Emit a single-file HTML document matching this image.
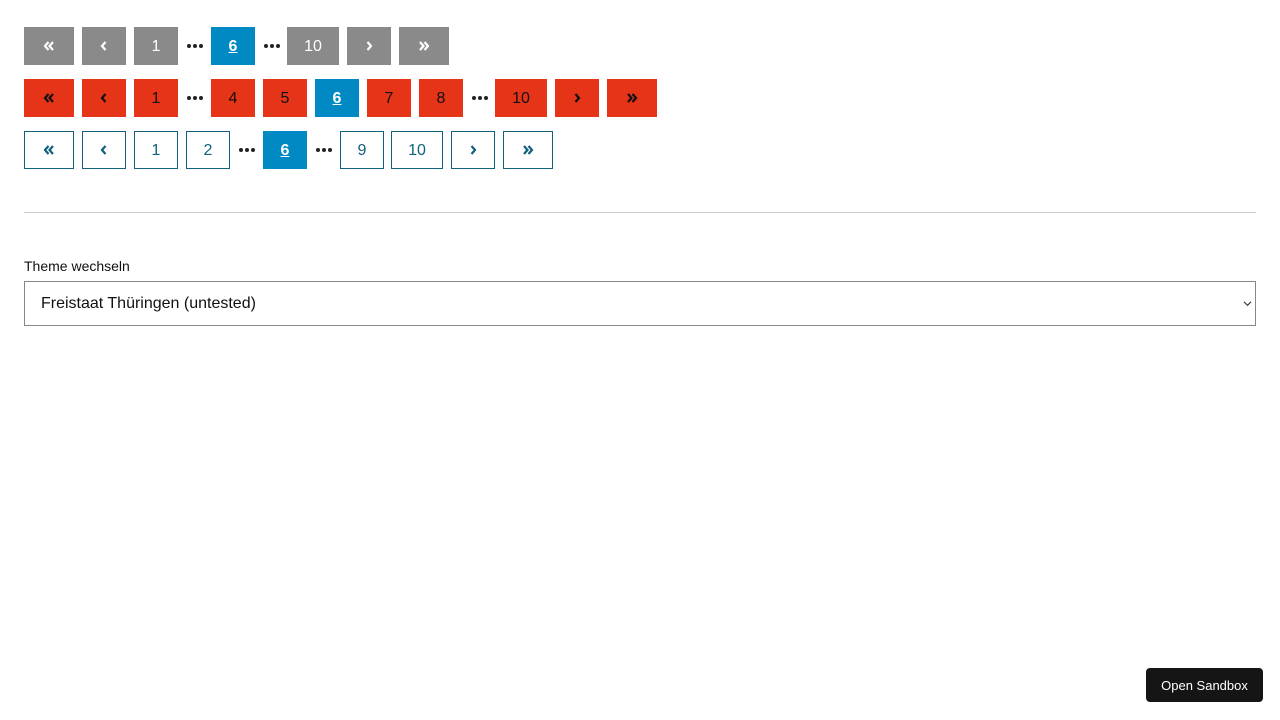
<!DOCTYPE html>
<html><head><meta charset="utf-8"><style>
body{margin:0;background:#fff;font-family:"Liberation Sans",sans-serif;}
.b{position:absolute;height:38px;display:flex;align-items:center;justify-content:center;font-size:16px;box-sizing:border-box;padding-top:2px}
.g{background:#8a8a8a;color:#fff}
.r{background:#e53417;color:#111}
.o{border:1px solid #10607e;color:#10607e;background:#fff}
.a{background:#0089c3;color:#fff;font-weight:bold;text-decoration:underline}
.d{position:absolute;height:38px;display:flex;align-items:center;justify-content:center;width:17px;gap:2px}
.d i{width:4px;height:4px;border-radius:50%;background:#222;display:block}
svg{width:18px;height:18px}
</style></head><body>
<div id="c"></div>
<div style="position:absolute;left:24px;right:24px;top:212px;border-top:1px solid #ccc"></div>
<div style="position:absolute;left:24px;top:258px;font-size:14px;color:#111">Theme wechseln</div>
<div style="position:absolute;left:24px;top:281px;width:1232px;height:45px;box-sizing:border-box;border:1px solid #888;font-size:16px;padding-left:16px;display:flex;align-items:center;color:#111">Freistaat Thüringen (untested)<svg style="position:absolute;right:3px;top:17px;width:9px;height:9px" viewBox="0 0 10 10" fill="none" stroke="#333" stroke-width="1.2"><path d="M1 3l4 4 4-4"/></svg></div>
<div style="position:absolute;left:1146px;top:668px;width:117px;height:34px;background:#151515;color:#fff;border-radius:4px;font-size:13px;display:flex;align-items:center;justify-content:center">Open Sandbox</div>
<script>
const ic={ff:'<path d="M8.5 5L5 9l3.5 4M13 5L9.5 9l3.5 4"/>',f:'<path d="M10.5 5L7 9l3.5 4"/>',n:'<path d="M7.5 5L11 9l-3.5 4"/>',nn:'<path d="M5 5l3.5 4L5 13M9.5 5L13 9l-3.5 4"/>'};
const rows=[[27,'g',[[24,50,'ff'],[82,44,'f'],[134,44,'1'],[186,'d'],[211,44,'6a'],[263,'d'],[287,52,'10'],[347,44,'n'],[399,50,'nn']]],
[79,'r',[[24,50,'ff'],[82,44,'f'],[134,44,'1'],[186,'d'],[211,44,'4'],[263,44,'5'],[315,44,'6a'],[367,44,'7'],[419,44,'8'],[471,'d'],[495,52,'10'],[555,44,'n'],[607,50,'nn']]],
[131,'o',[[24,50,'ff'],[82,44,'f'],[134,44,'1'],[186,44,'2'],[238,'d'],[263,44,'6a'],[315,'d'],[340,44,'9'],[391,52,'10'],[451,44,'n'],[503,50,'nn']]]];
let h='';
for(const [y,c,items] of rows){for(const it of items){
if(it[1]==='d'){h+=`<div class="d" style="left:${it[0]}px;top:${y}px"><i></i><i></i><i></i></div>`;continue;}
let [x,w,t]=it;let cls=c,content=t,st='';
if(t==='6a'){cls='a';content='6';}
else if(ic[t]){st='padding-top:0;';content=`<svg viewBox="0 0 18 18" fill="none" stroke="currentColor" stroke-width="2.2">${ic[t]}</svg>`;}
h+=`<div class="b ${cls}" style="${st}left:${x}px;top:${y}px;width:${w}px">${content}</div>`;}}
document.getElementById('c').innerHTML=h;
</script>
</body></html>
